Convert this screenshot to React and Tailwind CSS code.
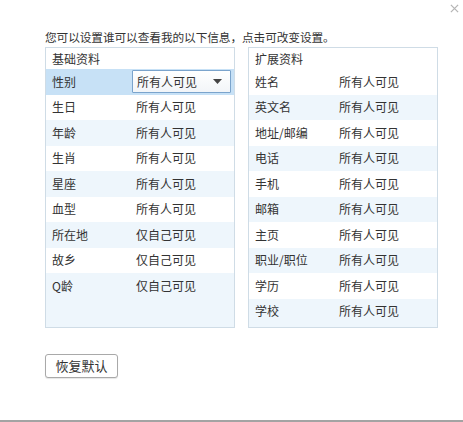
import React, { useState } from 'react';

const basic = [
  ['性别', '所有人可见'],
  ['生日', '所有人可见'],
  ['年龄', '所有人可见'],
  ['生肖', '所有人可见'],
  ['星座', '所有人可见'],
  ['血型', '所有人可见'],
  ['所在地', '仅自己可见'],
  ['故乡', '仅自己可见'],
  ['Q龄', '仅自己可见'],
];

const extended = [
  ['姓名', '所有人可见'],
  ['英文名', '所有人可见'],
  ['地址/邮编', '所有人可见'],
  ['电话', '所有人可见'],
  ['手机', '所有人可见'],
  ['邮箱', '所有人可见'],
  ['主页', '所有人可见'],
  ['职业/职位', '所有人可见'],
  ['学历', '所有人可见'],
  ['学校', '所有人可见'],
];

const Dropdown = ({ value }) => (
  <div className="w-[99px] h-[23px] -ml-[4px] pl-[4px] pr-[8px] flex items-center justify-between border border-[#7ba4cc] bg-gradient-to-b from-white to-[#f2f5f8] rounded-[1px]">
    <span>{value}</span>
    <svg width="9" height="5" viewBox="0 0 9 5">
      <path d="M0 0 L9 0 L4.5 5 Z" fill="#444" />
    </svg>
  </div>
);

const Panel = ({ title, rows, stripeOdd, selected, onSelect }) => (
  <div className="w-[190px] h-[281px] border border-[#cfdce6] flex flex-col bg-[#eef6fc]">
    <div className="h-[21px] pl-[6px] flex items-center bg-white">{title}</div>
    {rows.map(([label, value], i) => {
      const striped = stripeOdd ? i % 2 === 1 : i % 2 === 0;
      const isSel = selected === i;
      const bg = isSel ? 'bg-[#c7e1f6]' : striped ? 'bg-[#eef6fc]' : 'bg-white';
      return (
        <div
          key={label}
          onClick={() => onSelect && onSelect(i)}
          className={`h-[25.5px] flex items-center pl-[6px] ${bg}`}
        >
          <span className="w-[84px] shrink-0">{label}</span>
          {isSel ? <Dropdown value={value} /> : <span>{value}</span>}
        </div>
      );
    })}
  </div>
);

const App = () => {
  const [sel, setSel] = useState(0);
  return (
    <div
      className="w-[463px] h-[422px] bg-white text-[12px] text-[#333] flex flex-col border-b-2 border-[#a3a3a3] relative"
      style={{ fontFamily: '"Microsoft YaHei", "Noto Sans CJK SC", sans-serif' }}
    >
      <button className="absolute right-[2px] top-[1px] w-[14px] h-[14px] flex items-center justify-center">
        <svg width="9" height="9" viewBox="0 0 10 10">
          <path d="M1 1 L9 9 M9 1 L1 9" stroke="#b5b5b5" strokeWidth="1.4" />
        </svg>
      </button>
      <div className="pl-[45px] pt-[28px] flex flex-col">
        <div className="h-[19px] leading-[18px] text-[11.7px] tracking-[-0.1px]">您可以设置谁可以查看我的以下信息，点击可改变设置。</div>
        <div className="flex gap-[13px]">
          <Panel title="基础资料" rows={basic} stripeOdd={false} selected={sel} onSelect={setSel} />
          <Panel title="扩展资料" rows={extended} stripeOdd={true} />
        </div>
        <div className="mt-[26px]">
          <button className="w-[73px] h-[24px] border border-[#a9a9a9] rounded-[3px] bg-white text-[13px] text-[#333] shadow-[0_1px_1px_rgba(0,0,0,0.1)]">
            恢复默认
          </button>
        </div>
      </div>
    </div>
  );
};

export default App;
